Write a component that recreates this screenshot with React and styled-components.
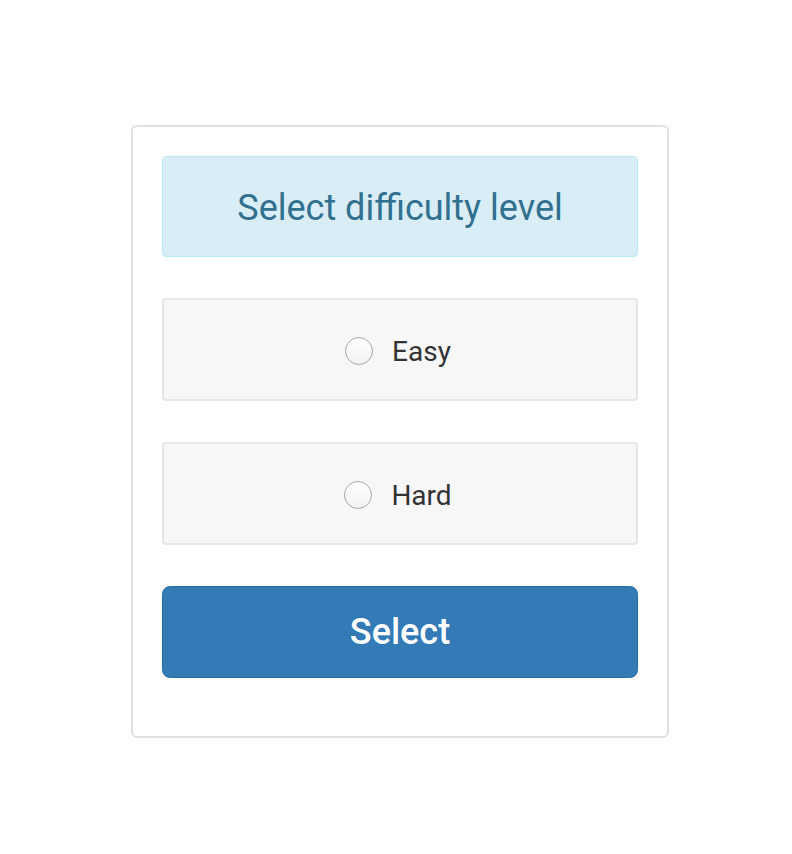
import React from 'react'
import styled, { createGlobalStyle } from 'styled-components'

const GlobalStyle = createGlobalStyle`
    body {
        margin: 0;
        background: #ffffff;
        font-family: Roboto, "Liberation Sans", sans-serif;
    }
`;

function App() {
    return (
        <Page>
            <GlobalStyle />
            <Card>
                <Heading>Select difficulty level</Heading>
                <Option>
                    <Radio type="radio" name="level" />
                    <OptionLabel>Easy</OptionLabel>
                </Option>
                <Option>
                    <Radio type="radio" name="level" />
                    <OptionLabel>Hard</OptionLabel>
                </Option>
                <SelectButton>Select</SelectButton>
            </Card>
        </Page>
    )
}

export default App

const Page = styled.div`
    padding: 125px 0 0 131px;
`;

const Card = styled.div`
    box-sizing: border-box;
    width: 538px;
    border: 2px solid #e0e0e0;
    border-radius: 6px;
    padding: 29px 29px 57px;
    display: flex;
    flex-direction: column;
    gap: 41px;
`;

const Heading = styled.div`
    box-sizing: border-box;
    height: 101px;
    padding-top: 2px;
    display: flex;
    align-items: center;
    justify-content: center;
    background: #d9edf7;
    border: 1px solid #bce8f1;
    border-radius: 4px;
    color: #31708f;
    font-size: 36px;
`;

const Option = styled.label`
    box-sizing: border-box;
    height: 103px;
    padding-top: 3px;
    display: flex;
    align-items: center;
    justify-content: center;
    gap: 19px;
    background: #f7f7f7;
    border: 2px solid #e6e6e6;
    border-radius: 4px;
`;

const Radio = styled.input`
    appearance: none;
    margin: 0 0 0 -4px;
    width: 28px;
    height: 28px;
    border-radius: 50%;
    border: 1px solid #a8a8a8;
    background: linear-gradient(#ffffff, #f2f2f2);
    box-sizing: border-box;
`;

const OptionLabel = styled.span`
    font-size: 28px;
    color: #333333;
`;

const SelectButton = styled.button`
    box-sizing: border-box;
    height: 92px;
    margin-bottom: 1px;
    background: #337ab7;
    border: 1px solid #2e6da4;
    border-radius: 8px;
    color: #ffffff;
    font-family: Roboto, "Liberation Sans", sans-serif;
    font-size: 36px;
    font-weight: 500;
`;
